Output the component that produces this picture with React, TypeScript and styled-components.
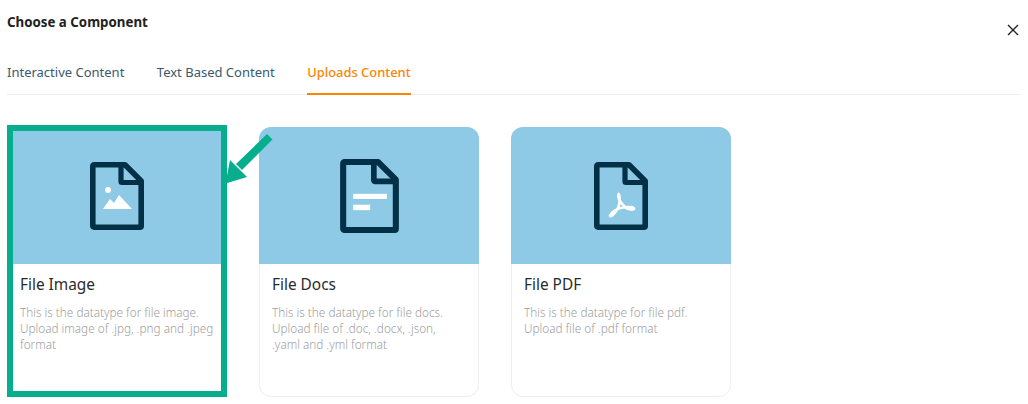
import React from "react";
import styled, { createGlobalStyle } from "styled-components";

const Global = createGlobalStyle`
  html, body { margin: 0; padding: 0; background: #fff; }
  body { font-family: "Noto Sans", "Open Sans", "Liberation Sans", sans-serif; }
`;

const Page = styled.div`
  position: relative;
  width: 1028px;
  height: 404px;
  overflow: hidden;
  padding: 0 7px;
  box-sizing: border-box;
`;

const Header = styled.div`
  display: flex;
  justify-content: space-between;
  align-items: flex-start;
  height: 54px;
  padding-top: 13px;
  box-sizing: border-box;
`;

const Title = styled.h1`
  margin: 0;
  font-size: 13.3px;
  line-height: 18px;
  font-weight: 700;
  color: #222;
`;

const Close = styled.button`
  border: 0;
  background: none;
  padding: 0;
  margin: 10px 1px 0 0;
  width: 14px;
  height: 14px;
  display: flex;
  color: #222;
`;

const Tabs = styled.div`
  display: flex;
  gap: 32.5px;
  height: 40px;
  border-bottom: 1px solid #eeeeee;
  box-sizing: content-box;
`;

const Tab = styled.div<{ $active?: boolean }>`
  font-size: ${(p) => (p.$active ? "12.9px" : "13px")};
  font-weight: ${(p) => (p.$active ? 500 : 400)};
  line-height: 18px;
  padding-top: 9px;
  box-sizing: content-box;
  height: 30px;
  color: ${(p) => (p.$active ? "#fb8500" : "#3a586e")};
  border-bottom: 2px solid ${(p) => (p.$active ? "#fb8500" : "transparent")};
`;

const Cards = styled.div`
  display: flex;
  gap: 32px;
  margin-top: 32px;
`;

const Card = styled.div`
  position: relative;
  width: 220px;
  height: 270px;
  box-sizing: border-box;
  border: 1px solid #eeeeee;
  border-radius: 12px;
  background: #fff;
`;

const Thumb = styled.div`
  height: 137px;
  margin: -1px -1px 0;
  background: #8ecae6;
  border-radius: 12px 12px 0 0;
  display: flex;
  align-items: center;
  justify-content: center;
`;

const CardTitle = styled.div`
  margin: 11px 12px 0;
  font-size: 15.4px;
  line-height: 20px;
  font-weight: 400;
  color: #2b2b2b;
`;

const CardText = styled.p`
  margin: 9px 12px 0;
  font-size: 11.75px;
  line-height: 16px;
  color: #a0a0a0;
  font-weight: 300;
`;

const Highlight = styled.div`
  position: absolute;
  left: -1px;
  top: -3px;
  width: 220px;
  height: 272px;
  box-sizing: border-box;
  border: 6px solid #07ae8d;
  pointer-events: none;
`;

const Arrow = styled.svg`
  position: absolute;
  left: 220px;
  top: 130px;
`;

const Ink = "#023047";

const FileIcon: React.FC<{ w: number; h: number; children?: React.ReactNode }> = ({ w, h, children }) => (
  <svg width={w} height={h} viewBox="0 0 54 68" fill="none">
    <path
      d="M2.800 4C2.800 3.300 3.300 2.800 4 2.800H35L51.200 19V64C51.200 64.700 50.700 65.200 50 65.200H4C3.300 65.200 2.800 64.700 2.800 64Z"
      stroke={Ink}
      strokeWidth="5.600"
      strokeLinejoin="round"
    />
    <path d="M31 2.800V19.500C31 20 31.500 20.500 32 20.500H51" stroke={Ink} strokeWidth="5.200" strokeLinejoin="miter" />
    {children}
  </svg>
);

const ImageMark = () => (
  <>
    <circle cx="18" cy="28" r="3" fill="#fff" />
    <path d="M13 47L20 37L24 41L29 33L42 47Z" fill="#fff" />
  </>
);

const DocMark = () => (
  <>
    <rect x="12" y="32" width="31" height="4.700" fill="#fff" />
    <rect x="12" y="42" width="15.600" height="5" fill="#fff" />
  </>
);

const PdfMark = () => (
  <path
    d="M24.500 32C23.500 36 27 41 30 44C33 47 37 48 40 47C41 45 34 44.500 29 45.500C23 46.500 17 50 16 53.500C17 56 21 51 24 46C26 42 26 35 25 32.500Z"
    stroke="#fff"
    strokeWidth="2.600"
    strokeLinejoin="round"
  />
);

const data = [
  {
    title: "File Image",
    text: ["This is the datatype for file image.", "Upload image of .jpg, .png and .jpeg", "format"],
    icon: <FileIcon w={54} h={68}><ImageMark /></FileIcon>,
  },
  {
    title: "File Docs",
    text: ["This is the datatype for file docs.", "Upload file of .doc, .docx, .json,", ".yaml and .yml format"],
    icon: <FileIcon w={59} h={74}><DocMark /></FileIcon>,
  },
  {
    title: "File PDF",
    text: ["This is the datatype for file pdf.", "Upload file of .pdf format"],
    icon: <FileIcon w={54} h={68}><PdfMark /></FileIcon>,
  },
];

export default function App() {
  return (
    <Page>
      <Global />
      <Header>
        <Title>Choose a Component</Title>
        <Close aria-label="Close">
          <svg width="14" height="14" viewBox="0 0 14 14">
            <path d="M2 2L12 12M12 2L2 12" stroke="#222" strokeWidth="1.4" />
          </svg>
        </Close>
      </Header>
      <Tabs>
        <Tab>Interactive Content</Tab>
        <Tab>Text Based Content</Tab>
        <Tab $active>Uploads Content</Tab>
      </Tabs>
      <Cards>
        {data.map((c, i) => (
          <Card key={c.title}>
            <Thumb>{c.icon}</Thumb>
            <CardTitle>{c.title}</CardTitle>
            <CardText>
              {c.text.map((t) => (
                <React.Fragment key={t}>
                  {t}
                  <br />
                </React.Fragment>
              ))}
            </CardText>
            {i === 0 && <Highlight />}
          </Card>
        ))}
      </Cards>
      <Arrow width="56" height="56" viewBox="220 130 56 56">
        <path d="M267 134L272.500 139.500L242 170L236 164Z" fill="#07ae8d" />
        <path d="M230 160L247 177L225.500 183.500Z" fill="#07ae8d" />
      </Arrow>
    </Page>
  );
}
